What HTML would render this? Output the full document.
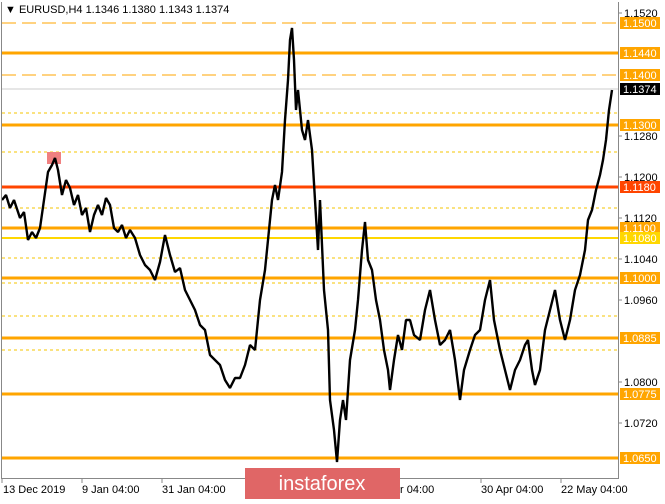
<!DOCTYPE html><html><head><style>
body{margin:0;width:665px;height:499px;background:#fff;overflow:hidden;font-family:"Liberation Sans",sans-serif;}
svg text{font-family:"Liberation Sans",sans-serif;font-size:11px;}
</style></head><body>
<svg width="665" height="499" xmlns="http://www.w3.org/2000/svg">
<rect x="0" y="0" width="665" height="499" fill="#fff"/>
<g stroke="#f5c400" stroke-dasharray="3,3" stroke-width="1">
<line x1="2" y1="113" x2="618" y2="113"/><line x1="2" y1="152" x2="618" y2="152"/>
<line x1="2" y1="208" x2="618" y2="208"/><line x1="2" y1="258" x2="618" y2="258"/>
<line x1="2" y1="283" x2="618" y2="283"/><line x1="2" y1="316" x2="618" y2="316"/>
<line x1="2" y1="350" x2="618" y2="350"/>
</g>
<line x1="2" y1="89" x2="618" y2="89" stroke="#ccc"/>
<g stroke="#ffa500" stroke-dasharray="14,6"><line x1="2" y1="23" x2="618" y2="23"/><line x1="2" y1="75" x2="618" y2="75"/></g>
<g stroke="#ffa500" stroke-width="3">
<line x1="2" y1="53" x2="618" y2="53"/><line x1="2" y1="125" x2="618" y2="125"/>
<line x1="2" y1="228" x2="618" y2="228"/><line x1="2" y1="278" x2="618" y2="278"/>
<line x1="2" y1="338" x2="618" y2="338"/><line x1="2" y1="394" x2="618" y2="394"/>
<line x1="2" y1="458" x2="618" y2="458"/></g>
<line x1="2" y1="238" x2="618" y2="238" stroke="#ffd700" stroke-width="2"/>
<line x1="2" y1="187" x2="618" y2="187" stroke="#ff4500" stroke-width="3"/>
<rect x="47" y="152" width="14" height="12" fill="#f08080"/>
<polyline fill="none" stroke="#000" stroke-width="2.4" stroke-linejoin="bevel" points="2,200 6,195 10,208 14,200 20,218 24,212 28,240 32,232 36,238 40,228 44,200 48,172 52,165 55,158 58,170 62,195 66,180 70,188 74,205 78,195 82,215 86,208 90,232 94,215 98,205 102,215 106,198 110,205 114,228 118,232 122,225 126,238 130,230 135,238 140,255 145,265 150,270 155,280 160,262 165,235 170,255 175,272 180,268 185,290 190,300 195,310 200,325 205,330 210,355 215,360 220,365 225,380 230,388 235,378 240,378 245,365 250,345 255,350 260,300 265,270 268,240 272,200 275,185 278,200 282,172 285,120 288,80 290,40 292,28 294,60 296,110 298,90 302,130 305,140 308,120 312,150 315,200 318,250 320,200 324,290 328,330 330,400 334,430 337,462 340,420 343,400 346,420 350,360 355,330 358,300 362,250 365,222 368,260 372,270 376,300 380,320 384,350 388,370 390,390 394,360 398,335 402,350 406,320 410,320 414,335 420,340 425,310 430,290 435,320 440,345 445,340 450,330 455,360 460,400 464,370 470,350 475,335 480,330 485,300 490,280 494,320 500,350 505,370 510,390 515,370 520,360 525,345 528,340 532,370 535,385 540,370 545,330 550,310 555,290 560,320 565,340 570,320 575,290 580,275 585,250 588,220 592,210 596,190 600,175 603,160 606,140 609,110 612,90"/>
<line x1="1.5" y1="2" x2="1.5" y2="478" stroke="#888"/>
<line x1="618.5" y1="2" x2="618.5" y2="478" stroke="#888"/>
<line x1="1" y1="478.5" x2="619" y2="478.5" stroke="#888"/>
<text x="5" y="13" fill="#000">▼ EURUSD,H4  1.1346 1.1380 1.1343 1.1374</text>
<g fill="#000">
<text x="624" y="17">1.1520</text><text x="624" y="140">1.1280</text><text x="624" y="181">1.1200</text>
<text x="624" y="222">1.1120</text><text x="624" y="263">1.1040</text><text x="624" y="304">1.0960</text>
<text x="624" y="386">1.0800</text><text x="624" y="427">1.0720</text>
</g>
<g stroke="#888"><line x1="619" y1="13" x2="622" y2="13"/><line x1="619" y1="136" x2="622" y2="136"/><line x1="619" y1="177" x2="622" y2="177"/><line x1="619" y1="218" x2="622" y2="218"/><line x1="619" y1="259" x2="622" y2="259"/><line x1="619" y1="300" x2="622" y2="300"/><line x1="619" y1="382" x2="622" y2="382"/><line x1="619" y1="423" x2="622" y2="423"/></g>
<g fill="#ffa500">
<rect x="620" y="17" width="40" height="12"/><rect x="620" y="47" width="40" height="12"/>
<rect x="620" y="69" width="40" height="12"/><rect x="620" y="119" width="40" height="12"/>
<rect x="620" y="222" width="40" height="12"/><rect x="620" y="272" width="40" height="12"/>
<rect x="620" y="332" width="40" height="12"/><rect x="620" y="388" width="40" height="12"/>
<rect x="620" y="452" width="40" height="12"/></g>
<rect x="620" y="232" width="40" height="12" fill="#ffd700"/>
<rect x="620" y="181" width="40" height="12" fill="#ff4500"/>
<rect x="620" y="83" width="40" height="12" fill="#000"/>
<g fill="#fff">
<text x="623" y="27">1.1500</text><text x="623" y="57">1.1440</text><text x="623" y="79">1.1400</text>
<text x="623" y="93">1.1374</text><text x="623" y="129">1.1300</text><text x="623" y="191">1.1180</text>
<text x="623" y="232">1.1100</text><text x="623" y="242">1.1080</text><text x="623" y="282">1.1000</text>
<text x="623" y="342">1.0885</text><text x="623" y="398">1.0775</text><text x="623" y="462">1.0650</text></g>
<g fill="#000"><text x="3" y="493">13 Dec 2019</text><text x="82" y="493">9 Jan 04:00</text><text x="162" y="493">31 Jan 04:00</text>
<text x="400" y="493">r 04:00</text><text x="481" y="493">30 Apr 04:00</text><text x="561" y="493">22 May 04:00</text></g>
<g stroke="#888"><line x1="2" y1="479" x2="2" y2="483"/><line x1="82" y1="479" x2="82" y2="483"/><line x1="162" y1="479" x2="162" y2="483"/><line x1="481" y1="479" x2="481" y2="483"/><line x1="561" y1="479" x2="561" y2="483"/></g>
<rect x="245" y="468" width="155" height="31" fill="#e06666"/>
<text x="322" y="490" fill="#fff" text-anchor="middle" style="font-size:20px">instaforex</text>
</svg>
</body></html>
